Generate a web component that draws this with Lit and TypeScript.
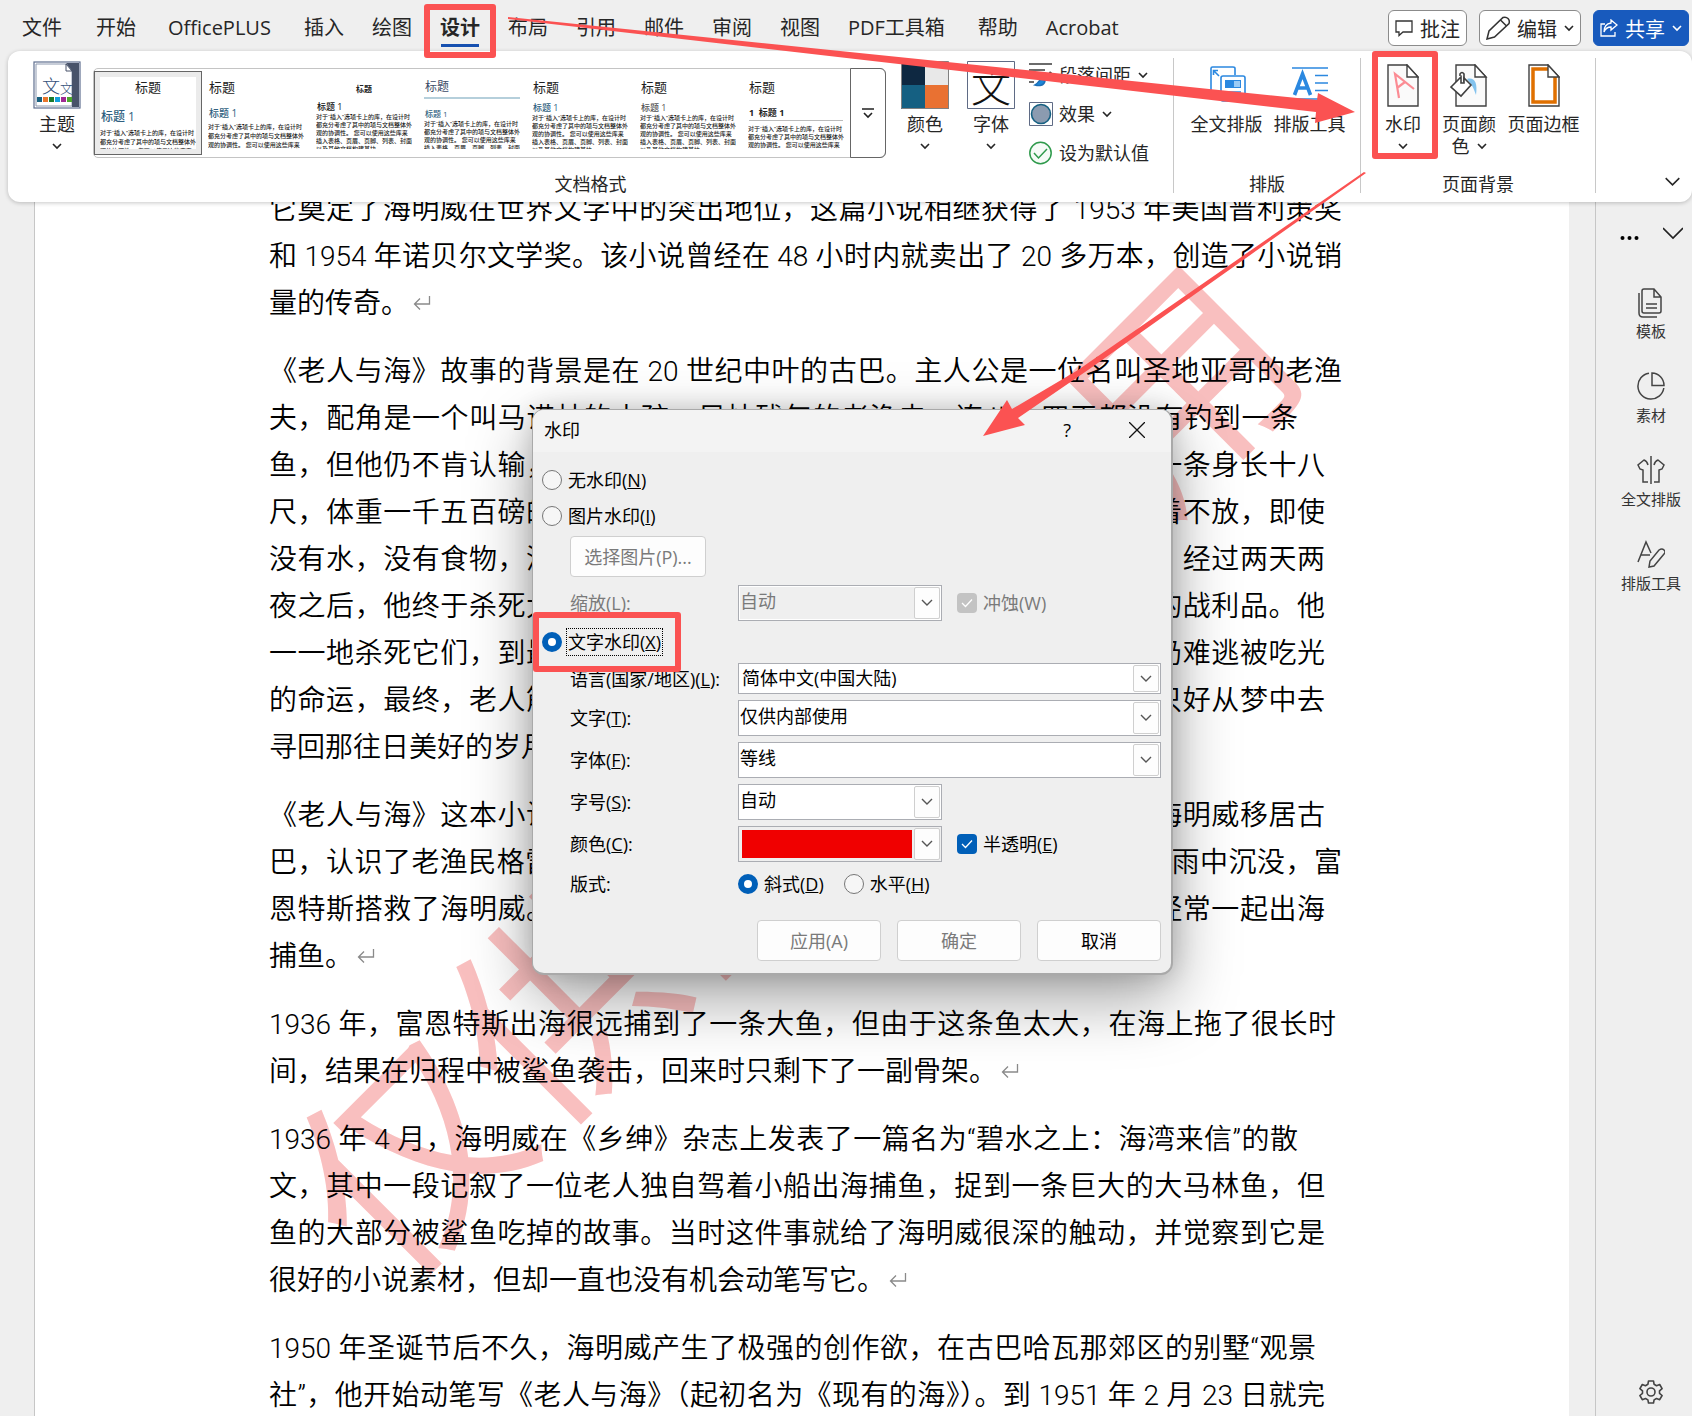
import { LitElement, html, svg, css, nothing } from "lit";
import { customElement } from "lit/decorators.js";
import { classMap } from "lit/directives/class-map.js";

type Line = { text: string; fit?: "full" | "wide" | "short" | "mid" | "near" };
const l = (text: string, fit?: Line["fit"]): Line => ({ text, fit });

const PARAGRAPHS: Line[][] = [
  [
    l("它奠定了海明威在世界文学中的突出地位，这篇小说相继获得了 1953 年美国普利策奖", "wide"),
    l("和 1954 年诺贝尔文学奖。该小说曾经在 48 小时内就卖出了 20 多万本，创造了小说销", "wide"),
    l("量的传奇。"),
  ],
  [
    l("《老人与海》故事的背景是在 20 世纪中叶的古巴。主人公是一位名叫圣地亚哥的老渔", "wide"),
    l("夫，配角是一个叫马诺林的小孩。风烛残年的老渔夫一连八十四天都没有钓到一条", "short"),
    l("鱼，但他仍不肯认输，而是充满着奋斗的精神，终于在第八十五天钓到一条身长十八", "full"),
    l("尺，体重一千五百磅的大马林鱼。大鱼拖着船往海里走，老人依然死拉着不放，即使", "full"),
    l("没有水，没有食物，没有武器，没有助手，左手抽筋，他也丝毫不灰心。经过两天两", "full"),
    l("夜之后，他终于杀死大鱼，把它拴在船边。但许多鲨鱼立刻前来抢夺他的战利品。他", "full"),
    l("一一地杀死它们，到最后只剩下一支折断的舵柄作为武器。结果，大鱼仍难逃被吃光", "full"),
    l("的命运，最终，老人筋疲力尽地拖回一副鱼骨头。他回到家躺在床上，只好从梦中去", "full"),
    l("寻回那往日美好的岁月，以忘却残酷的现实。"),
  ],
  [
    l("《老人与海》这本小说是根据真人真事写的。第一次世界大战结束后，海明威移居古", "full"),
    l("巴，认识了老渔民格雷戈里奥·富恩特斯。1930 年，海明威乘的船在暴风雨中沉没，富", "wide"),
    l("恩特斯搭救了海明威。从此，海明威与富恩特斯结下了深厚的友谊，并经常一起出海", "full"),
    l("捕鱼。"),
  ],
  [
    l("1936 年，富恩特斯出海很远捕到了一条大鱼，但由于这条鱼太大，在海上拖了很长时", "mid"),
    l("间，结果在归程中被鲨鱼袭击，回来时只剩下了一副骨架。"),
  ],
  [
    l("1936 年 4 月，海明威在《乡绅》杂志上发表了一篇名为“碧水之上：海湾来信”的散", "short"),
    l("文，其中一段记叙了一位老人独自驾着小船出海捕鱼，捉到一条巨大的大马林鱼，但", "full"),
    l("鱼的大部分被鲨鱼吃掉的故事。当时这件事就给了海明威很深的触动，并觉察到它是", "full"),
    l("很好的小说素材，但却一直也没有机会动笔写它。"),
  ],
  [
    l("1950 年圣诞节后不久，海明威产生了极强的创作欲，在古巴哈瓦那郊区的别墅“观景", "near"),
    l("社”，他开始动笔写《老人与海》（起初名为《现有的海》）。到 1951 年 2 月 23 日就完", "full"),
  ],
];

const TABS = ["文件", "开始", "OfficePLUS", "插入", "绘图", "设计", "布局", "引用", "邮件", "审阅", "视图", "PDF工具箱", "帮助", "Acrobat"];

const STYLE_TEXT =
  "对于“插入”选项卡上的库，在设计时都充分考虑了其中的项与文档整体外观的协调性。 您可以使用这些库来插入表格、页眉、页脚、列表、封面以及其他文档构建基块。";

const chev = (w = 10, thick = 1.6) => html`<svg class="chev" width=${w} height=${w} viewBox="0 0 10 10" aria-hidden="true">
  <path d="M1 3l4 4 4-4" fill="none" stroke="currentColor" stroke-width=${thick} /></svg>`;

const icons = {
  theme: html`<svg width="48" height="48" viewBox="0 0 48 48">
    <rect x="1" y="1" width="46" height="46" fill="#fff" stroke="#5f6f8f" stroke-width="1.2" />
    <path d="M3 3h30l6 7v35H3z" fill="#fff" stroke="#8e9ab0" />
    <path d="M33 2h13v44h-7V10z" fill="#48536a" /><path d="M33 3v7h6z" fill="#fff" stroke="#48536a" />
    <text x="9" y="32" font-size="18" fill="#34507a">文</text><text x="27" y="32" font-size="13" fill="#34507a">文</text>
    <path d="M4 36h5v5H4z" fill="#17607f" /><path d="M10 36h5v5h-5z" fill="#e8762c" /><path d="M16 36h5v5h-5z" fill="#1a7a2c" />
    <path d="M22 36h5v5h-5z" fill="#11a0dc" /><path d="M28 36h5v5h-5z" fill="#a02b93" /><path d="M34 36h5v5h-5z" fill="#4ea72e" /></svg>`,
  colors: html`<svg width="48" height="48" viewBox="0 0 48 48">
    <path d="M0 0h24v24H0z" fill="#0e2841" /><path d="M24 0h24v24H24z" fill="#e8e8e8" />
    <path d="M0 24h24v24H0z" fill="#156082" /><path d="M24 24h24v24H24z" fill="#e97132" />
    <path d="M.5.5h47v47H.5z" fill="none" stroke="#808080" /></svg>`,
  fonts: html`<svg width="48" height="48" viewBox="0 0 48 48"><path d="M.5.5h47v47H.5z" fill="#fff" stroke="#5f6b85" />
    <text x="4" y="41" font-size="40" fill="#111">文</text></svg>`,
  spacing: html`<svg width="24" height="24" viewBox="0 0 24 24" fill="none" stroke="#3b3b3b" stroke-width="1.4">
    <path d="M0 1h23M0 7h16M0 13h11M0 19h5" /><path d="M22 9l-6 8" stroke-width="2.5" />
    <path d="M6 22c4 1 9 1 10-4l-3-2c-3 0-3 4-7 6z" fill="#1c86d8" stroke="#1c6fb8" /></svg>`,
  effect: html`<svg width="24" height="24" viewBox="0 0 24 24"><path d="M.5.5h23v23H.5z" fill="#fff" stroke="#5f6b85" />
    <circle cx="12" cy="12" r="9.5" fill="#8b9bb0" stroke="#156082" stroke-width="1.6" /></svg>`,
  check: html`<svg width="24" height="24" viewBox="0 0 24 24" fill="none" stroke="#2f9a4c" stroke-width="1.5">
    <circle cx="11.5" cy="12" r="10.7" fill="#f6fbf7" /><path d="M5 12l4.500 5 8.500-9" /></svg>`,
  layout: html`<svg width="38" height="38" viewBox="0 0 38 38" fill="none" stroke="#2b88e0" stroke-width="1.6">
    <path d="M11 29H3V2.500Q3 1 4.500 1H25q2 0 2 1.500V9" /><path d="M5.500 9V4.500H10M6 5l5 5" />
    <rect x="13" y="10" width="24" height="25" rx="2" /><rect x="17" y="14" width="16" height="8" fill="#2b88e0" stroke="none" />
    <path d="M26 15h6v6h-6z" fill="#9ccbf5" stroke="none" /><path d="M17 26h16M17 30h12" /></svg>`,
  tool: html`<svg width="38" height="38" viewBox="0 0 38 38" fill="none" stroke="#2b88e0" stroke-width="1.4">
    <path d="M1 2h36M24 9.500h13M24 17h13M24 24.500h13M1 33h36" />
    <path d="M3.500 29L11.500 8 19.500 29M6.500 22h10" stroke-width="3.6" /></svg>`,
  watermark: html`<svg width="32" height="43" viewBox="0 0 32 43" fill="#fafafa" stroke="#404040" stroke-width="1.4">
    <path d="M1 1h19l11 12v29H1z" /><path d="M20 1v12h11z" fill="#fff" />
    <path d="M12 34L8 10l19 15M10 24l8-6" fill="none" stroke="#fb8c94" stroke-width="2.2" /></svg>`,
  pagecolor: html`<svg width="38" height="43" viewBox="0 0 38 43" fill="#fafafa" stroke="#404040" stroke-width="1.4">
    <path d="M6 1h19l11 12v29H6z" /><path d="M25 1v12h11z" fill="#fff" />
    <path d="M17 15c7-2 11 3 9 16-2-6-4-10-6-12z" fill="#83c3ee" stroke="none" />
    <path d="M10 12v-2q2-3 4 0v8" fill="none" stroke-width="1.6" />
    <path d="M1 23l10-10v6h3v-5l7 7-10 11z" fill="#fff" stroke-width="1.6" /></svg>`,
  border: html`<svg width="32" height="43" viewBox="0 0 32 43" fill="#fff" stroke="#404040" stroke-width="1.4">
    <path d="M1 1h19l11 12v29H1z" /><path d="M20 5H5v33h22V13" fill="none" stroke="#e07000" stroke-width="3.5" />
    <path d="M20 1v12h11z" /></svg>`,
  comment: html`<svg width="18" height="18" viewBox="0 0 18 18" fill="none" stroke="#333" stroke-width="1.3">
    <path d="M1 2h16v11H8l-4 3.500V13H1z" /></svg>`,
  pencil: html`<svg width="24" height="24" viewBox="0 0 24 24" fill="none" stroke="#333" stroke-width="1.5">
    <path d="M1 23l2-8L17 1.500q3-1 5 1 2 2 1 5L8.500 21zM14.500 4l5.500 5.500" /></svg>`,
  share: html`<svg width="18" height="18" viewBox="0 0 18 18" fill="none" stroke="#fff" stroke-width="1.3">
    <path d="M5 5H1v12h14v-4" /><path d="M11 1l6 5-6 5V8Q6 8 4 13q0-8 7-9z" /></svg>`,
  template: html`<svg width="28" height="30" viewBox="0 0 28 30" fill="none" stroke="#444" stroke-width="1.5">
    <path d="M7 1h10l7 8v14q0 2-2 2H7q-2 0-2-2V3q0-2 2-2zM17 1v8h7M9 16h11M9 20h11" /><path d="M2 5v20q0 4 4 4h14" /></svg>`,
  pie: html`<svg width="28" height="28" viewBox="0 0 28 28" fill="none" stroke="#444" stroke-width="1.5">
    <path d="M12 1.200A13 13 0 1 0 26.800 16" /><path d="M15 1v12.500h12A12.500 12.500 0 0 0 15 1z" /></svg>`,
  shirt: html`<svg width="28" height="28" viewBox="0 0 28 28" fill="none" stroke="#444" stroke-width="1.5">
    <path d="M14 0v28" /><path d="M11 9Q10 5 7 4L1 9l2 4 3 1v12h5M17 9q1-4 4-5l6 5-2 4-3 1v12h-5" /></svg>`,
  pen: html`<svg width="28" height="28" viewBox="0 0 28 28" fill="none" stroke="#444" stroke-width="1.5">
    <path d="M1 22L9 2l5 11M4 15h9" /><path d="M12 27l1-6 9-11q3-2 5 0t0 4L17 26z" /></svg>`,
  gear: html`<svg width="24" height="24" viewBox="0 0 24 24" fill="none" stroke="#444" stroke-width="1.6" stroke-linejoin="round">
    <circle cx="12" cy="12" r="4" />
    <path d="M9.500 1h5l.6 3.300 2.400 1.400 3.200-1.200 2.400 4.200-2.600 2.200v2.400l2.600 2.200-2.400 4.200-3.200-1.200-2.400 1.400-.6 3.100h-5l-.6-3.100-2.400-1.400-3.200 1.200L.9 15.500l2.600-2.200v-2.400L.9 8.700l2.400-4.200 3.200 1.200 2.400-1.400z" /></svg>`,
  ret: html`<svg class="ret" width="18" height="16" viewBox="0 0 18 16" fill="none" stroke="#8a8a8a" stroke-width="1.3">
    <path d="M16.500 1v8H2M7 3.500L1.500 9 7 14.500" /></svg>`,
};

const fontStack = css`"Open Sans", "Noto Sans CJK SC", sans-serif`;

@customElement("ribbon-bar")
class RibbonBar extends LitElement {
  static styles = css`
    :host { display: block; position: relative; z-index: 2; font-family: ${fontStack}; color: #262626; }
    * { box-sizing: border-box; }
    button { font: inherit; color: inherit; background: none; border: 0; padding: 0; margin: 0; }
    svg { display: block; flex: none; }
    svg text { font-family: "Noto Sans CJK SC", sans-serif; font-weight: 300; }
    .top { display: flex; align-items: center; height: 51px; padding: 5px 3px 0 22px; }
    .tabs { display: flex; gap: 28px; font-size: 20px; line-height: 28px; flex: 1; white-space: nowrap; }
    .tabs a { color: inherit; text-decoration: none; }
    .tabs a:first-child { margin-right: 6px; }
    .tabs .latin { padding: 0 5px 0 4px; }
    .tabs .mixed { padding-right: 5px; }
    .tabs .on { font-weight: 700; box-shadow: 0 3px 0 -1px #efefef, 0 6px 0 -1px #1650b0; height: 28px; }
    .actions { display: flex; gap: 12px; }
    .actions button { display: flex; align-items: center; gap: 7px; height: 36px; padding: 0 6px; font-size: 20px;
      background: #fff; border: 1px solid #8b8b8b; border-radius: 6px; }
    .actions .share { background: #185abd; border-color: #185abd; color: #fff; }
    .card { display: flex; height: 151px; margin-left: 8px; padding: 7px 0 9px; background: #fff; border-radius: 12px;
      box-shadow: 0 1px 4px rgba(0, 0, 0, .22); }
    .group { display: flex; flex-direction: column; justify-content: space-between; border-right: 1px solid #c8c8c8; font-size: 18px; line-height: 22px; }
    .row { display: flex; padding-top: 3px; }
    .g1 .row { padding-left: 16px; padding-right: 7px; }
    .g2 .row { padding: 3px 9px 0 11px; }
    .g3 .row { padding: 3px 10px 0 9px; }
    .name { text-align: center; line-height: 18px; }
    .big { display: flex; flex-direction: column; align-items: center; width: 66px; white-space: nowrap; }
    .big .pic { display: flex; align-items: center; justify-content: center; height: 48px; margin-bottom: 4px; }
    .big .chev { margin-top: 6px; }
    .wide { width: 83px; }
    .two { display: flex; gap: 7px; align-items: center; }
    .two .chev { margin: 0; }
    .gallery { display: flex; height: 90px; margin: 7px 6px 0 3px; border: 1px solid #c4c4c4; border-radius: 5px; }
    .thumb { width: 108px; height: 84px; margin-top: 2px; padding: 6px; text-align: left; }
    .thumb.sel { background: #ebebeb; outline: 1px solid #666; outline-offset: -1px; }
    .thumb.sel .paper { background: #fff; }
    .paper { display: flex; flex-direction: column; height: 72px; overflow: hidden; font-size: 6px; line-height: 8px; color: #222; font-weight: 500; }
    .paper .body { font-family: "Liberation Sans", "Noto Sans CJK SC", sans-serif; }
    .paper b { font-size: 13px; line-height: 20px; font-weight: 400; padding: 0 1px; }
    .paper i { font-style: normal; font-size: 9px; line-height: 12px; margin: 5px 1px 0; }
    .blue i { color: #2f5f80; }
    .s0 b { text-align: center; } .s0 i { font-size: 12px; line-height: 16px; margin-top: 12px; margin-bottom: 4px; } .s0 .body { line-height: 9px; }
    .s1 i { font-size: 10px; line-height: 14px; margin-top: 9px; margin-bottom: 3px; } .s1 .body { line-height: 9px; }
    .s2 b { text-align: center; font-size: 8px; line-height: 24px; font-weight: 700; } .s2 i { margin-top: 0; color: #111; }
    .s3 b { font-size: 12px; color: #3b4a66; border-bottom: 2px solid #b5cfdb; } .s3 i { font-size: 8px; margin-top: 9px; }
    .s5 i { color: #555; }
    .s6 i { font-weight: 700; border-bottom: 1px solid #bbb; margin-top: 9px; margin-bottom: 4px; line-height: 14px; white-space: pre; }
    .more { display: grid; place-items: center; width: 36px; margin: -1px -1px -1px 0; border: 1px solid #666; border-radius: 0 6px 6px 0; }
    .list { display: flex; flex-direction: column; gap: 15px; width: 137px; margin-left: 5px; padding-top: 2px; white-space: nowrap; }
    .list button { display: flex; align-items: center; gap: 6px; height: 24px; }
    .list .chev { margin-left: 1px; }
    .collapse { margin-left: auto; align-self: flex-end; padding: 0 11px 3px 0; }
  `;
  render() {
    const heads = ["标题 1", "标题 1", "标题 1", "标题 1", "标题 1", "标题 1", "1  标题 1"];
    return html`
      <div class="top">
        <nav class="tabs">${TABS.map((t) => html`<a href="#" class=${classMap({ on: t === "设计", latin: t === "OfficePLUS", mixed: t === "PDF工具箱" })}>${t}</a>`)}</nav>
        <div class="actions">
          <button>${icons.comment}批注</button>
          <button>${icons.pencil}编辑${chev()}</button>
          <button class="share">${icons.share}共享${chev()}</button>
        </div>
      </div>
      <div class="card">
        <section class="group g1">
          <div class="row">
            <button class="big"><span class="pic">${icons.theme}</span>主题${chev()}</button>
            <div class="gallery">
              ${heads.map((h, i) => html`<button class=${classMap({ thumb: true, sel: i === 0 })}>
                <span class="paper s${i} ${[0, 1, 3, 4].includes(i) ? "blue" : ""}"><b>标题</b><i>${h}</i><span class="body">${STYLE_TEXT}</span></span>
              </button>`)}
              <button class="more" aria-label="其他"><svg width="12" height="12" viewBox="0 0 12 12" fill="none" stroke="#222" stroke-width="1.6"><path d="M0 2h12M2 6l4 4 4-4" /></svg></button>
            </div>
            <button class="big"><span class="pic">${icons.colors}</span>颜色${chev()}</button>
            <button class="big"><span class="pic">${icons.fonts}</span>字体${chev()}</button>
            <div class="list">
              <button>${icons.spacing}段落间距${chev()}</button>
              <button>${icons.effect}效果${chev()}</button>
              <button>${icons.check}设为默认值</button>
            </div>
          </div>
          <div class="name">文档格式</div>
        </section>
        <section class="group g2">
          <div class="row">
            <button class="big wide"><span class="pic">${icons.layout}</span>全文排版</button>
            <button class="big wide"><span class="pic">${icons.tool}</span>排版工具</button>
          </div>
          <div class="name">排版</div>
        </section>
        <section class="group g3">
          <div class="row">
            <button class="big"><span class="pic">${icons.watermark}</span>水印${chev()}</button>
            <button class="big"><span class="pic">${icons.pagecolor}</span>页面颜<span class="two">色${chev()}</span></button>
            <button class="big wide"><span class="pic">${icons.border}</span>页面边框</button>
          </div>
          <div class="name">页面背景</div>
        </section>
        <button class="collapse" aria-label="折叠功能区">${chev(17, 0.9)}</button>
      </div>`;
  }
}

@customElement("doc-page")
class DocPage extends LitElement {
  static styles = css`
    :host { display: block; position: relative; overflow: hidden; background: #fff; border-left: 1px solid #c6c6c6; }
    .text { position: relative; display: flex; flex-direction: column; gap: 21px; padding-left: 234px; margin-top: -16px;
      font: 350 28px/47px Roboto, "Noto Sans CJK SC", sans-serif; color: #000; }
    p { margin: 0; white-space: nowrap; }
    .line { display: block; white-space: normal; width: 1076px; }
    .full, .wide, .short, .mid, .near { text-align: justify; text-align-last: justify; }
    .full { width: 1056px; }
    .wide { width: 1073px; }
    .short { width: 1029px; }
    .mid { width: 1067px; }
    .near { width: 1047px; }
    .ret { display: inline-block; margin-left: 4px; vertical-align: 2px; }
    .mark { position: absolute; left: 750px; top: 560px; transform: translate(-50%, -50%) rotate(-45deg); white-space: nowrap;
      font: 400 218px/1 "Noto Sans CJK SC", sans-serif; color: #f9bfbf; }
  `;
  render() {
    return html`<div class="mark">仅供内部使用</div>
      <div class="text">${PARAGRAPHS.map((p) => html`<p>${p.map(
        (x) => html`<span class="line ${x.fit ?? ""}">${x.text}${x.fit ? nothing : icons.ret}</span>`,
      )}</p>`)}</div>`;
  }
}

@customElement("side-rail")
class SideRail extends LitElement {
  static styles = css`
    :host { display: flex; flex-direction: column; align-items: center; width: 97px; border-left: 1px solid #c6c6c6; box-sizing: border-box;
      padding-top: 22px; font: 15px/20px ${fontStack}; color: #333; }
    button { display: flex; flex-direction: column; align-items: center; background: none; border: 0; padding: 0; font: inherit; color: inherit; }
    .head { display: flex; align-items: center; gap: 23px; align-self: flex-end; padding-right: 9px; color: #222; }
    .items { display: flex; flex-direction: column; gap: 31px; padding: 44px 0 0 14px; flex: 1; }
    .items button { height: 53px; justify-content: space-between; }
    .gear { padding: 0 0 12px 14px; }
  `;
  render() {
    const items = [
      { icon: icons.template, label: "模板" },
      { icon: icons.pie, label: "素材" },
      { icon: icons.shirt, label: "全文排版" },
      { icon: icons.pen, label: "排版工具" },
    ];
    return html`<div class="head">
        <button aria-label="更多"><svg width="20" height="20" viewBox="0 0 20 20"><circle cx="2.5" cy="14" r="2" /><circle cx="9.5" cy="14" r="2" /><circle cx="16.5" cy="14" r="2" /></svg></button>
        <button aria-label="收起"><svg width="20" height="20" viewBox="0 0 20 20" fill="none" stroke="#222" stroke-width="1.6"><path d="M0 4l10 10L20 4" /></svg></button>
      </div>
      <div class="items">${items.map((i) => html`<button>${i.icon}<span>${i.label}</span></button>`)}</div>
      <button class="gear" aria-label="设置">${icons.gear}</button>`;
  }
}

@customElement("watermark-dialog")
class WatermarkDialog extends LitElement {
  static styles = css`
    :host { display: flex; flex-direction: column; width: 641px; box-sizing: border-box; background: #efefef; border-radius: 12px; overflow: hidden;
      font: 18px/24px ${fontStack}; color: #000; border: 1px solid #a9a9a9; border-width: 1px 2px 2px 1px;
      box-shadow: 0 24px 64px rgba(0, 0, 0, .36), 0 0 24px rgba(0, 0, 0, .16); }
    * { box-sizing: border-box; }
    header { display: flex; align-items: center; height: 42px; padding: 0 26px 2px 11px; background: #f3f3f3; }
    header span { flex: 1; }
    header button { border: 0; background: none; padding: 0; font: inherit; display: flex; }
    header .help { margin-right: 58px; }
    .body { display: flex; flex-direction: column; gap: 3px; padding: 11px 10px 12px 9px; }
    .opt { display: flex; align-items: center; gap: 6px; height: 33px; }
    .tall { height: 36px; }
    input { appearance: none; flex: none; width: 20px; height: 20px; margin: 0; border: 1px solid #767676; border-radius: 50%; background: #f6f6f6; }
    input[type="radio"]:checked { border: 6px solid #005fb8; background: #fff; }
    input[type="checkbox"] { border: 0; border-radius: 4px; background: #005fb8; grid-area: 1 / 1; }
    input[type="checkbox"]:disabled { background: #c3c3c3; }
    .tick { display: grid; place-items: center; }
    .tick svg { grid-area: 1 / 1; pointer-events: none; }
    .focus { outline: 1px dotted #000; outline-offset: 1px; }
    .btn { height: 41px; border: 1px solid #cfcfcf; border-radius: 4px; background: #fdfdfd; font: inherit; padding: 0; color: #000; }
    .btn:disabled, .dim { color: #7a7a7a; }
    .pick { width: 136px; margin-top: 1px; margin-left: 28px; }
    .form { display: grid; row-gap: 6px; }
    .field { display: flex; align-items: center; height: 36px; padding-left: 28px; }
    .field > .lab { width: 168px; flex: none; }
    .scale { margin-top: 5px; }
    .lang { height: 31px; }
    .box { display: grid; width: 204px; height: 100%; flex: none; }
    .box.long { flex: 1; width: auto; }
    .box select, .box .arrow { grid-area: 1 / 1; }
    select { appearance: none; width: 100%; height: 100%; margin: 0; padding: 0 30px 5px 1px; font: inherit; color: #000; background: #fff;
      border: 1px solid #abadb3; border-radius: 0; }
    select:disabled { color: #7a7a7a; opacity: 1; background: #efefef; box-shadow: inset 0 0 0 1px #fff; }
    .lang select { padding: 0 30px 2px 3px; }
    select.red { padding: 3px 29px 3px 3px; background: #fff linear-gradient(#f00000, #f00000) content-box no-repeat; }
    .arrow { justify-self: end; display: grid; place-items: center; width: 26px; margin: 2px; border: 1px solid #cfcfcf; border-radius: 2px; background: #fdfdfd; pointer-events: none; }
    .side { display: flex; align-items: center; gap: 6px; margin-left: 15px; }
    .radios { display: flex; gap: 20px; }
    .foot { display: flex; justify-content: flex-end; gap: 16px; margin-top: 18px; }
    .foot .btn { width: 124px; }
  `;
  private select(id: string, value: string, o: { long?: boolean; disabled?: boolean; red?: boolean } = {}) {
    return html`<span class="box ${o.long ? "long" : ""}"><select id=${id} class=${o.red ? "red" : ""} ?disabled=${o.disabled}><option>${value}</option></select>
      <span class="arrow"><svg width="12" height="8" viewBox="0 0 12 8" fill="none" stroke="#555" stroke-width="1.4"><path d="M1 1l5 5 5-5" /></svg></span></span>`;
  }
  private check(id: string, disabled = false) {
    return html`<span class="tick"><input type="checkbox" id=${id} checked ?disabled=${disabled} />
      <svg width="12" height="10" viewBox="0 0 12 10" fill="none" stroke="#fff" stroke-width="1.3"><path d="M1 5l3.500 3.500L11 1.500" /></svg></span>`;
  }
  render() {
    return html`
      <header><span>水印</span><button class="help" aria-label="帮助">?</button>
        <button aria-label="关闭"><svg width="16" height="16" viewBox="0 0 16 16" stroke="#111" stroke-width="1.3"><path d="M0 0l16 16M16 0L0 16" /></svg></button></header>
      <div class="body">
        <div class="opt"><input type="radio" name="kind" id="none" /><label for="none">无水印(<u>N</u>)</label></div>
        <div class="opt"><input type="radio" name="kind" id="image" /><label for="image">图片水印(<u>I</u>)</label></div>
        <button class="btn pick" disabled>选择图片(P)...</button>
        <div class="field scale"><label class="lab dim" for="zoom">缩放(L):</label>${this.select("zoom", "自动", { disabled: true })}
          <span class="side dim">${this.check("wash", true)}<label for="wash">冲蚀(W)</label></span></div>
        <div class="opt tall"><input type="radio" name="kind" id="words" checked /><label class="focus" for="words">文字水印(<u>X</u>)</label></div>
        <div class="form">
          <div class="field lang"><label class="lab" for="lang">语言(国家/地区)(<u>L</u>):</label>${this.select("lang", "简体中文(中国大陆)", { long: true })}</div>
          <div class="field"><label class="lab" for="txt">文字(<u>T</u>):</label>${this.select("txt", "仅供内部使用", { long: true })}</div>
          <div class="field"><label class="lab" for="font">字体(<u>F</u>):</label>${this.select("font", "等线", { long: true })}</div>
          <div class="field"><label class="lab" for="size">字号(<u>S</u>):</label>${this.select("size", "自动")}</div>
          <div class="field"><label class="lab" for="color">颜色(<u>C</u>):</label>${this.select("color", "", { red: true })}
            <span class="side">${this.check("half")}<label for="half">半透明(<u>E</u>)</label></span></div>
          <div class="field lang"><span class="lab">版式:</span><div class="radios">
            <span class="opt"><input type="radio" name="dir" id="diag" checked /><label for="diag">斜式(<u>D</u>)</label></span>
            <span class="opt"><input type="radio" name="dir" id="flat" /><label for="flat">水平(<u>H</u>)</label></span></div></div>
        </div>
        <div class="foot"><button class="btn" disabled>应用(A)</button><button class="btn" disabled>确定</button><button class="btn">取消</button></div>
      </div>`;
  }
}

@customElement("app-root")
class AppRoot extends LitElement {
  static styles = css`
    :host { display: flex; flex-direction: column; position: relative; height: 100vh; overflow: hidden; background: #efefef; }
    .work { display: flex; flex: 1; min-height: 0; }
    doc-page { flex: 1; margin: 0 26px 0 34px; }
    side-rail { flex: none; }
    watermark-dialog { position: absolute; left: 532px; top: 409px; z-index: 3; }
    .notes { position: absolute; left: 0; top: 0; z-index: 4; pointer-events: none; }
  `;
  render() {
    return html`<ribbon-bar></ribbon-bar>
      <div class="work"><doc-page></doc-page><side-rail></side-rail></div>
      <watermark-dialog></watermark-dialog>
      <svg class="notes" width="1692" height="1416" viewBox="0 0 1692 1416" aria-hidden="true">${svg`
        <g fill="none" stroke="#fb5252" stroke-width="6" stroke-linejoin="round">
          <rect x="427" y="7" width="66" height="48" /><rect x="1375" y="54" width="60" height="102" /><rect x="536" y="615" width="142" height="54" />
        </g>
        <g fill="#fb5252">
          <path d="M508 17L1317 100L1318 93L1355 112L1315 123L1316 112L508 19z" />
          <path d="M1364 172L1078 370L1012 409L1007 400L983 436L1025 425L1018 418L1088 370L1366 173z" />
        </g>`}</svg>`;
  }
}
